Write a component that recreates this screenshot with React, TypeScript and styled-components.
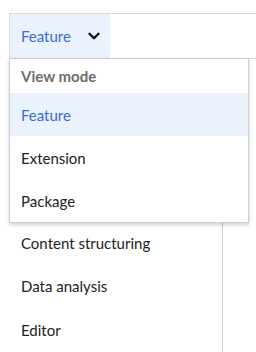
import React from "react";
import styled, { createGlobalStyle } from "styled-components";

const Global = createGlobalStyle`
  html, body { margin: 0; padding: 0; background: #fff; }
  body { font-family: Lato, "Liberation Sans", sans-serif; color: #222; }
`;

const Page = styled.div`
  width: 256px;
  height: 352px;
  overflow: hidden;
  padding: 13px 0 0 9px;
  box-sizing: border-box;
`;

const Frame = styled.div`
  position: relative;
  height: 100%;
  display: flex;
  flex-direction: column;
`;

const Toolbar = styled.div`
  display: flex;
  height: 44px;
  border-top: 1px solid #dcdcdc;
  border-left: 1px solid #dcdcdc;
  border-bottom: 1px solid #d6d6d6;
  flex-shrink: 0;
`;

const ModeButton = styled.button`
  display: flex;
  align-items: center;
  width: 100px;
  padding: 0 0 0 11px;
  border: none;
  background: #eaf2fe;
  color: #3a6bd6;
  font-family: Lato, "Liberation Sans", sans-serif;
  font-size: 15px;
  cursor: pointer;
  svg { margin-left: auto; margin-right: 7px; }
`;

const Body = styled.div`
  display: flex;
  flex: 1;
`;

const Sidebar = styled.div`
  width: 213px;
  border-right: 1px solid #cfcfcf;
  padding-top: 162px;
  display: flex;
  flex-direction: column;
`;

const SideItem = styled.div`
  height: 43.5px;
  display: flex;
  align-items: center;
  padding-left: 12px;
  font-size: 15px;
  color: #222;
`;

const Menu = styled.div`
  position: absolute;
  top: 45px;
  left: 0;
  width: 240px;
  background: #fff;
  border: 1px solid #cfcfcf;
  box-shadow: 0 2px 4px rgba(0, 0, 0, 0.18);
  box-sizing: border-box;
  z-index: 2;
`;

const MenuLabel = styled.div`
  height: 34px;
  display: flex;
  align-items: center;
  padding-left: 11px;
  font-size: 15px;
  font-weight: 700;
  color: #6e6e6e;
`;

const MenuItem = styled.div<{ $active?: boolean }>`
  height: 43px;
  display: flex;
  align-items: center;
  padding-left: 11px;
  font-size: 15px;
  color: ${(p) => (p.$active ? "#3a6bd6" : "#222")};
  background: ${(p) => (p.$active ? "#eaf2fe" : "transparent")};
`;

const Chevron = () => (
  <svg width="18" height="18" viewBox="0 0 24 24" fill="none" stroke="#111" strokeWidth="3.2" strokeLinecap="round" strokeLinejoin="round">
    <path d="m6 9 6 6 6-6" />
  </svg>
);

export default function App() {
  return (
    <>
      <Global />
      <Page>
        <Frame>
          <Toolbar>
            <ModeButton>
              Feature
              <Chevron />
            </ModeButton>
          </Toolbar>
          <Body>
            <Sidebar>
              <SideItem>Content structuring</SideItem>
              <SideItem>Data analysis</SideItem>
              <SideItem>Editor</SideItem>
            </Sidebar>
          </Body>
          <Menu>
            <MenuLabel>View mode</MenuLabel>
            <MenuItem $active>Feature</MenuItem>
            <MenuItem>Extension</MenuItem>
            <MenuItem>Package</MenuItem>
          </Menu>
        </Frame>
      </Page>
    </>
  );
}
